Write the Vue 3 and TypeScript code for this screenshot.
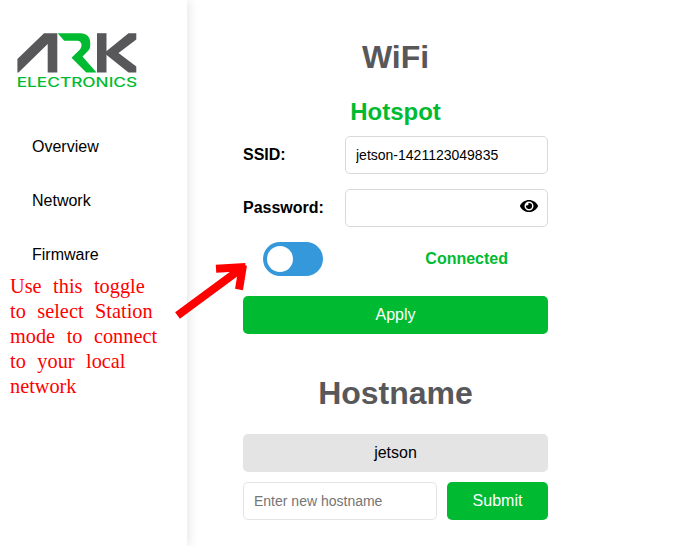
<script setup lang="ts">
import { ref } from 'vue'

const links: string[] = ['Overview', 'Network', 'Firmware']
const ssid = ref('jetson-1421123049835')
const password = ref('')
const showPassword = ref(false)
const station = ref(false)
const hostname = ref('jetson')
const newHostname = ref('')
const noteLines: string[] = [
  'Use this toggle',
  'to select Station',
  'mode to connect',
  'to your local',
  'network',
]

function submitHostname(): void {
  if (newHostname.value) hostname.value = newHostname.value
}
</script>

<template>
  <div class="page">
    <aside class="sidebar">
      <svg class="logo" viewBox="0 0 140 72" width="140" height="72" aria-label="ARK Electronics">
        <g fill="#58585a">
          <path d="M9.400 48.500V35L36 9.200H49.300V48.500H39.700V20L10.500 48.500Z" />
          <path d="M89 9.200H98.500V48.500H89Z" />
          <path d="M128.300 9.200V15.500L110.500 29L128.300 42.500V48.500H120.500L98 30.500V27.500L120.500 9.200Z" />
        </g>
        <path
          fill="#00bb31"
          d="M49.700 9.200H72.500C78.500 9.200 82.200 13 82.200 18.500V22C82.200 24.200 81.200 26 79.500 27.500L74.500 32.500L88.500 48.500H78.300L63.500 33.800L71.500 26C74.500 23 74.500 16.700 69 16.700H56.200Z"
        />
        <text class="logo-text" x="8.700" y="62.800" textLength="120.500" lengthAdjust="spacingAndGlyphs">ELECTRONICS</text>
      </svg>
      <nav class="nav">
        <a v-for="link in links" :key="link" class="nav-link">{{ link }}</a>
      </nav>
    </aside>

    <main class="content">
      <h1>WiFi</h1>
      <h2>Hotspot</h2>
      <div class="field">
        <label for="ssid">SSID:</label>
        <input id="ssid" v-model="ssid" class="input" type="text" />
      </div>
      <div class="field">
        <label for="password">Password:</label>
        <div class="password">
          <input id="password" v-model="password" class="input" :type="showPassword ? 'text' : 'password'" />
          <svg class="eye" viewBox="0 0 576 512" width="18" height="16" @click="showPassword = !showPassword">
            <path
              fill-rule="evenodd"
              d="M573 241C518 136 411 64 288 64S58 136 3 241a32 32 0 0 0 0 30c55 105 162 177 285 177s230-72 285-177a32 32 0 0 0 0-30zM288 400a144 144 0 1 1 0-288 144 144 0 0 1 0 288zM288 160a95 95 0 0 0-25 4a48 48 0 0 1-67 67A96 96 0 1 0 288 160z"
            />
          </svg>
        </div>
      </div>
      <div class="mode">
        <button class="toggle" :class="{ on: station }" aria-label="Station mode" @click="station = !station">
          <span class="knob"></span>
        </button>
        <span class="status">Connected</span>
      </div>
      <button class="button">Apply</button>

      <h1 class="second">Hostname</h1>
      <div class="current">{{ hostname }}</div>
      <form class="rename" @submit.prevent="submitHostname">
        <input v-model="newHostname" class="input light" type="text" placeholder="Enter new hostname" />
        <button class="button submit" type="submit">Submit</button>
      </form>
    </main>

    <p class="note">
      <span v-for="line in noteLines" :key="line">{{ line }}</span>
    </p>
    <svg class="arrow" viewBox="0 0 80 60" width="80" height="60">
      <path d="M7.500 55.500L74 6.500M46 8.700L75.500 7M69 29.500L73 5" />
    </svg>
  </div>
</template>

<style>
body {
  margin: 0;
  background: #fff;
}
</style>

<style scoped>
.page {
  position: relative;
  display: flex;
  height: 546px;
  overflow: hidden;
  font: 16px/18px "Liberation Sans", Arial, sans-serif;
  color: #000;
}
.sidebar {
  box-sizing: border-box;
  flex: 0 0 187px;
  padding: 24px 8px;
  box-shadow: 2px 0 10px rgba(0, 0, 0, 0.1);
}
.logo {
  display: block;
}
.logo-text {
  font: 500 12.500px Inter, sans-serif;
  fill: #00bb31;
}
.nav {
  display: flex;
  flex-direction: column;
  gap: 36px;
  padding: 42px 24px 0;
}
.content {
  display: flex;
  flex-direction: column;
  width: 305px;
  margin-left: 56px;
}
h1 {
  margin: 39px 0 0;
  font-size: 32px;
  line-height: 37px;
  text-align: center;
  color: #58585a;
}
h2 {
  margin: 22px 0 11px;
  font-size: 24px;
  line-height: 27px;
  text-align: center;
  color: #00bb31;
}
.field {
  display: flex;
  align-items: center;
  justify-content: space-between;
  margin-bottom: 15px;
}
label {
  font-weight: bold;
}
.input {
  box-sizing: border-box;
  width: 203px;
  height: 38px;
  padding: 0 10px;
  border: 1px solid #d9d9d9;
  border-radius: 5px;
  outline: none;
  background: #fff;
  font: 14px "Liberation Sans", Arial, sans-serif;
  color: #000;
}
.password {
  position: relative;
  display: flex;
}
.eye {
  position: absolute;
  top: 9px;
  right: 10px;
}
.mode {
  display: flex;
  align-items: center;
  justify-content: space-between;
  padding: 0 40px 0 20px;
}
.toggle {
  display: flex;
  width: 60px;
  height: 34px;
  padding: 4px;
  border: 0;
  border-radius: 17px;
  background: #3498db;
}
.toggle.on {
  justify-content: flex-end;
}
.knob {
  width: 26px;
  height: 26px;
  border-radius: 50%;
  background: #fff;
}
.status {
  font-weight: bold;
  color: #00bb31;
}
.button {
  height: 38px;
  margin-top: 20px;
  padding: 0;
  border: 0;
  border-radius: 5px;
  background: #00bb31;
  font: 16px "Liberation Sans", Arial, sans-serif;
  color: #fff;
}
.second {
  margin-top: 41px;
}
.current {
  margin-top: 22px;
  border-radius: 5px;
  background: #e4e4e4;
  line-height: 38px;
  text-align: center;
}
.rename {
  display: flex;
  gap: 10px;
  margin-top: 10px;
}
.light {
  width: 194px;
  border-color: #e4e4e4;
}
.submit {
  flex: 1;
  margin-top: 0;
}
.note {
  position: absolute;
  top: 274px;
  left: 10px;
  display: flex;
  flex-direction: column;
  margin: 0;
  font: 20.300px/25px "Liberation Serif", "Times New Roman", serif;
  word-spacing: 6.500px;
  white-space: nowrap;
  color: #f00;
}
.arrow {
  position: absolute;
  top: 260px;
  left: 170px;
  overflow: visible;
  fill: none;
  stroke: #f00;
  stroke-width: 8px;
}
</style>
